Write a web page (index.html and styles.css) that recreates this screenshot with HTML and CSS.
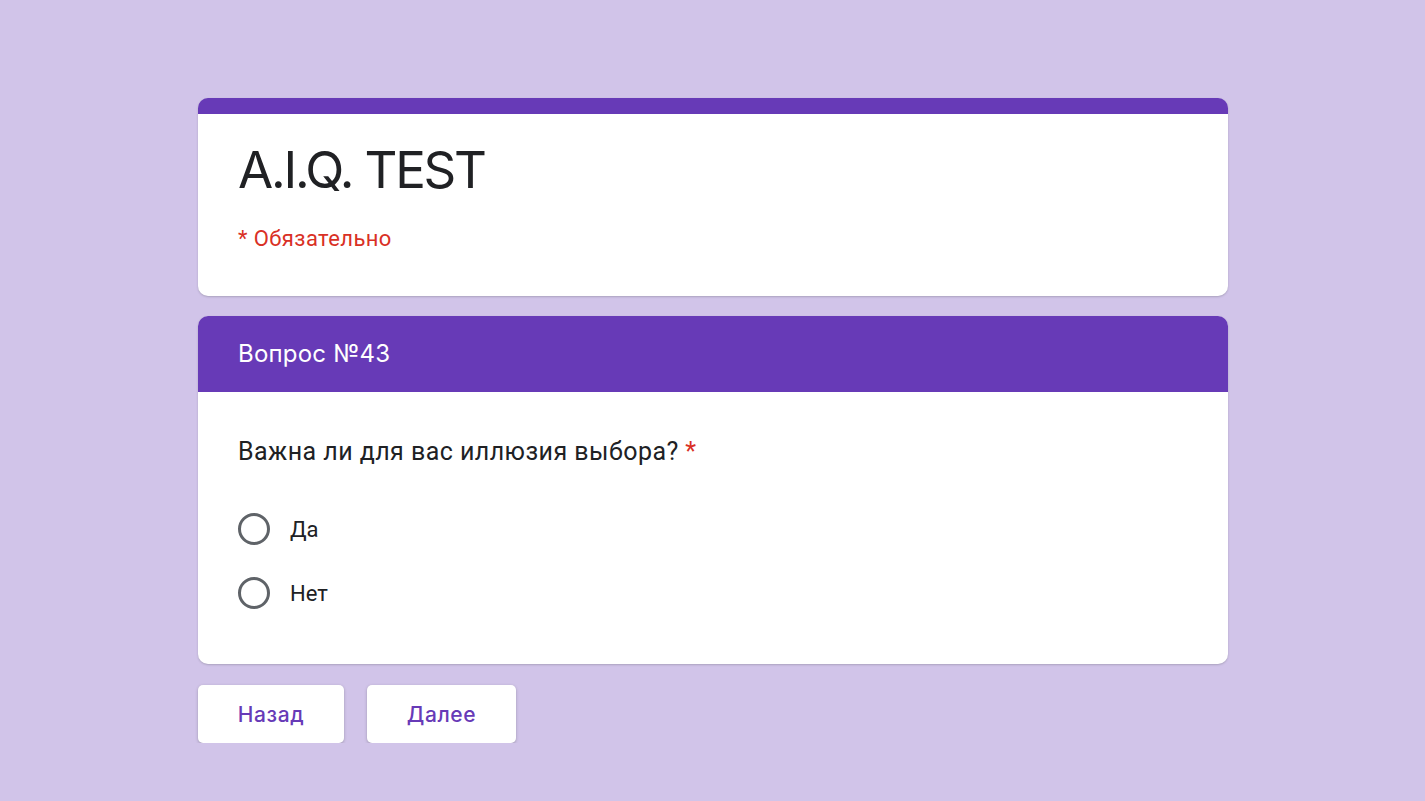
FILE: index.html
```html
<!DOCTYPE html>
<html lang="ru">
<head>
    <meta charset="UTF-8">
    <meta name="viewport" content="width=device-width, initial-scale=1.0">
    <title>A.I.Q. TEST</title>
    <link rel="stylesheet" href="styles.css">
</head>
<body>
    <div class="form">
        <div class="card title-card">
            <h1 class="form-title">A.I.Q. TEST</h1>
            <p class="required-note">* Обязательно</p>
        </div>

        <div class="card section-card">
            <div class="section-head">Вопрос №43</div>
            <div class="section-body">
                <p class="question">Важна ли для вас иллюзия выбора? <span class="star">*</span></p>
                <label class="option">
                    <span class="radio"></span>
                    <span class="option-text">Да</span>
                </label>
                <label class="option">
                    <span class="radio"></span>
                    <span class="option-text">Нет</span>
                </label>
            </div>
        </div>

        <div class="buttons">
            <button class="nav-btn back">Назад</button>
            <button class="nav-btn next">Далее</button>
        </div>
    </div>
</body>
</html>
```

FILE: styles.css
```css
body {
    margin: 0;
    background: #d1c4e9;
    font-family: Roboto, "Liberation Sans", sans-serif;
    color: #202124;
}

.form {
    width: 1030px;
    margin-left: 198px;
    padding-top: 98px;
}

.card {
    background: #fff;
    border-radius: 10px;
    box-shadow: 0 1px 2px rgba(60, 64, 67, 0.25);
    overflow: hidden;
}

.title-card {
    box-sizing: border-box;
    height: 198px;
    border-top: 16px solid #673ab7;
    padding: 25px 40px 0;
}

.form-title {
    font-family: Inter, "Open Sans", sans-serif;
    font-weight: 400;
    font-size: 51px;
    letter-spacing: -2.2px;
    line-height: 62px;
    margin: 0;
    color: #202124;
}

.required-note {
    color: #d93025;
    font-size: 22px;
    letter-spacing: 0.4px;
    line-height: 30px;
    margin: 23px 0 0;
}

.section-card {
    margin-top: 20px;
}

.section-head {
    background: #673ab7;
    color: #fff;
    font-family: Inter, "Open Sans", sans-serif;
    font-size: 24px;
    letter-spacing: 0.2px;
    height: 76px;
    line-height: 76px;
    padding: 0 40px;
}

.section-body {
    padding: 44px 40px 39px;
}

.question {
    font-size: 25px;
    letter-spacing: 0.45px;
    margin: 0 0 29px;
    line-height: 32px;
}

.star {
    color: #d93025;
}

.option {
    display: flex;
    align-items: center;
    height: 64px;
    gap: 20px;
}

.radio {
    width: 26px;
    height: 26px;
    border: 3px solid #5f6368;
    border-radius: 50%;
}

.option-text {
    font-size: 22px;
}

.buttons {
    display: flex;
    gap: 23px;
    margin-top: 21px;
}

.nav-btn {
    background: #fff;
    border: none;
    border-radius: 5px;
    box-shadow: 0 1px 3px rgba(60, 64, 67, 0.35);
    color: #673ab7;
    font-family: Inter, "Open Sans", sans-serif;
    font-size: 21px;
    font-weight: 500;
    letter-spacing: 0.6px;
    height: 58px;
}

.back {
    width: 146px;
}

.next {
    width: 149px;
}
```
